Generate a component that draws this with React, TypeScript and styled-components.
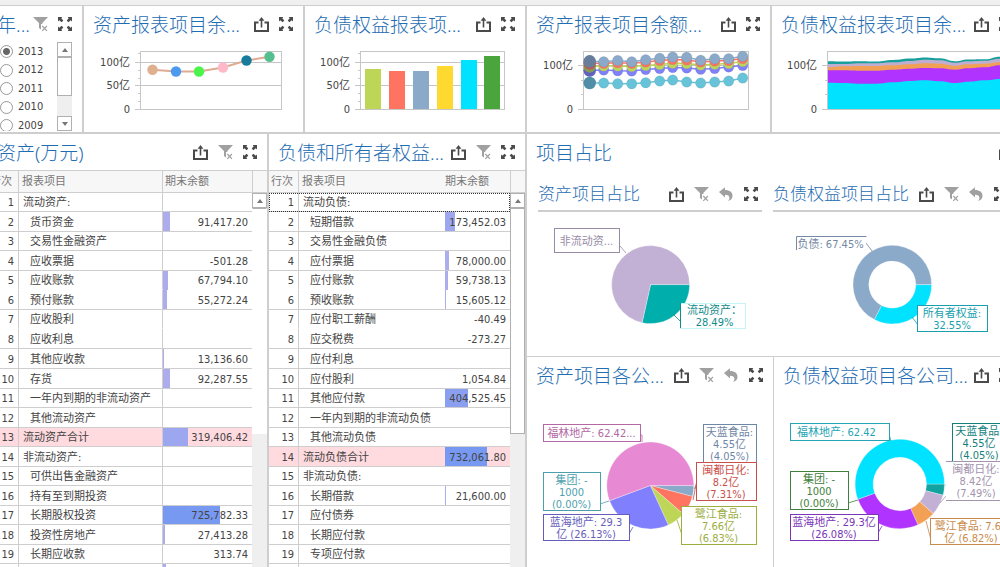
import React from "react";
import styled, { createGlobalStyle, css } from "styled-components";

const LINE = "#cecece";
const TEXT_FONT = `"DejaVu Sans Condensed", "Noto Sans CJK SC", sans-serif`;
const TITLE_FONT = `"Noto Sans", "Noto Sans CJK SC", sans-serif`;

const GlobalStyle = createGlobalStyle`
  * { box-sizing: border-box; }
  body { margin: 0; background: #f0f0f0; font: 11px/18px ${TEXT_FONT}; color: #444; }
  h1, h2, h3 { margin: 0; }
`;

/* ---------- layout ---------- */

const Viewport = styled.main`
  height: 100vh;
  overflow: hidden;
  padding-top: 5px;
`;

const Board = styled.div`
  display: flex;
  flex-direction: column;
  gap: 2px;
  height: 100%;
  margin: 0 -23px 0 -12px;
  border-top: 1px solid ${LINE};
  background: ${LINE};
`;

const TopRow = styled.div`
  display: grid;
  grid-template-columns: 94px 219px 220px 243px 1fr;
  gap: 2px;
  height: 126px;
  flex: none;
`;

const MainRow = styled.div`
  display: grid;
  grid-template-columns: 279px 256px 1fr;
  gap: 2px;
  flex: 1;
  min-height: 0;
`;

const Panel = styled.section`
  display: flex;
  flex-direction: column;
  min-width: 0;
  overflow: hidden;
  background: #fff;
`;

const PanelHead = styled.header`
  display: flex;
  align-items: center;
  justify-content: space-between;
  flex: none;
  height: 36px;
  padding: 0 9px;
`;

const Title = styled.h2`
  padding-top: 2px;
  font: 300 19px/32px ${TITLE_FONT};
  color: #1f6db3;
  white-space: nowrap;
`;

const SubTitle = styled.h3`
  font: 300 17px/30px ${TITLE_FONT};
  color: #1f6db3;
  white-space: nowrap;
`;

const Tools = styled.div`
  display: flex;
  gap: 10px;
  flex: none;
`;

const ToolButton = styled.button<{ $muted?: boolean }>`
  display: block;
  width: 15px;
  height: 15px;
  padding: 0;
  border: 0;
  background: none;
  color: ${(p) => (p.$muted ? "#a0a0a0" : "#4a4a4a")};
  svg { display: block; }
`;

const ShareRow = styled.div`
  display: grid;
  grid-template-columns: 224px 1fr;
  gap: 11px;
  padding: 8px 11px 0;
`;

const ShareItem = styled.section`
  min-width: 0;
`;

const ShareHead = styled.header`
  display: flex;
  align-items: center;
  justify-content: space-between;
  height: 34px;
  padding: 0 3px 0 0;
  border-bottom: 2px solid ${LINE};
`;

const CompanyRow = styled.div`
  display: grid;
  grid-template-columns: 246px 1fr;
  gap: 1px;
  flex: 1;
  border-top: 1px solid ${LINE};
  background: ${LINE};
`;

const Column = styled.div`
  display: flex;
  flex-direction: column;
  flex: none;
`;

const Drawing = styled.svg`
  display: block;
  flex: none;
  overflow: visible;
  text { font: 11px ${TEXT_FONT}; }
`;

/* ---------- icons ---------- */

type ToolName = "export" | "filter" | "undo" | "expand";

const toolLabels: Record<ToolName, string> = {
  export: "导出",
  filter: "清除筛选",
  undo: "返回",
  expand: "最大化",
};

const corner = "M0 0h4.400L3.300 1.300 5.300 3.600 3.600 5.300 1.300 3.300 0 4.400z";

const toolShapes: Record<ToolName, React.ReactNode> = {
  export: (
    <>
      <path d="M4.5 5.5H1V14h13V5.5h-3.5" fill="none" stroke="currentColor" strokeWidth="2" />
      <path d="M7.5 10.5V2" stroke="currentColor" strokeWidth="1.6" />
      <path d="M4.6 3.8 7.5 0l2.9 3.8z" fill="currentColor" />
    </>
  ),
  filter: (
    <>
      <path d="M0 0h15L9.3 6v7.5L6 11V6z" fill="currentColor" />
      <path d="M8 7h7v8H8z" fill="#fff" />
      <path d="M9.3 9l4.6 4.8M13.9 9l-4.6 4.8" stroke="currentColor" strokeWidth="1.2" />
    </>
  ),
  undo: <path d="M0 5 6 .2v2.800c4.800 0 7.500 2.200 7.500 5.800 0 2.700-1.700 4.700-4.500 5.200 1-1 1.400-2 1.400-3.100 0-2-1.400-3.100-4.400-3.100v2.600z" fill="currentColor" />,
  expand: (
    <g fill="currentColor">
      <path d={corner} />
      <path d={corner} transform="translate(14 0) scale(-1 1)" />
      <path d={corner} transform="translate(0 14) scale(1 -1)" />
      <path d={corner} transform="translate(14 14) scale(-1 -1)" />
    </g>
  ),
};

function ToolBar({ tools }: { tools: ToolName[] }) {
  return (
    <Tools>
      {tools.map((t) => (
        <ToolButton key={t} type="button" aria-label={toolLabels[t]} $muted={t === "filter" || t === "undo"}>
          <svg width="15" height="15" viewBox="0 0 15 15">{toolShapes[t]}</svg>
        </ToolButton>
      ))}
    </Tools>
  );
}

function Widget({ title, tools, children }: { title: string; tools: ToolName[]; children?: React.ReactNode }) {
  return (
    <Panel>
      <PanelHead>
        <Title>{title}</Title>
        <ToolBar tools={tools} />
      </PanelHead>
      {children}
    </Panel>
  );
}

/* ---------- scroll bars ---------- */

const ScrollTrack = styled.div`
  display: flex;
  flex-direction: column;
  width: 15px;
  flex: 1;
  background: #efefef;
`;

const ScrollEnd = styled.button<{ $down?: boolean }>`
  display: flex;
  align-items: center;
  justify-content: center;
  height: 15px;
  flex: none;
  padding: 0;
  border: 1px solid #b0b0b0;
  background: #fff;
  &::before {
    content: "";
    border: 3px solid transparent;
    ${(p) => (p.$down ? "border-top: 4px solid #777; border-bottom: 0;" : "border-bottom: 4px solid #777; border-top: 0;")}
  }
`;

const ScrollThumb = styled.div<{ $size: number; $plain?: boolean }>`
  height: ${(p) => p.$size}px;
  flex: none;
  background: #fff;
  border: 1px solid ${(p) => (p.$plain ? "#fff" : "#b0b0b0")};
  border-top-color: #b0b0b0;
`;

const Spacer = styled.div`
  flex: 1;
`;

/* ---------- year filter ---------- */

const YearBody = styled.div`
  display: flex;
  justify-content: space-between;
  height: 89px;
  padding: 0 10px 0 12px;
`;

const YearList = styled.div`
  overflow: hidden;
`;

const YearOption = styled.label`
  display: flex;
  align-items: center;
  gap: 5px;
  height: 19px;
  &:nth-child(even) { height: 18px; }
`;

const Radio = styled.input`
  appearance: none;
  width: 13px;
  height: 13px;
  margin: 0;
  border: 1px solid #999;
  border-radius: 50%;
  background: #fff;
  &:checked { background: radial-gradient(circle, #666 0 3px, #fff 4px); }
`;

function YearFilter() {
  return (
    <Widget title="年..." tools={["filter", "expand"]}>
      <YearBody>
        <YearList>
          {["2013", "2012", "2011", "2010", "2009"].map((y, i) => (
            <YearOption key={y}>
              <Radio type="radio" name="year" value={y} defaultChecked={i === 0} />
              {y}
            </YearOption>
          ))}
        </YearList>
        <Column>
          <ScrollTrack>
            <ScrollEnd type="button" aria-label="向上" />
            <ScrollThumb $size={39} />
            <Spacer />
            <ScrollEnd type="button" aria-label="向下" $down />
          </ScrollTrack>
        </Column>
      </YearBody>
    </Widget>
  );
}

/* ---------- tables ---------- */

const TableBody = styled.div`
  display: flex;
  flex: 1;
  min-height: 0;
`;

const HeadStub = styled.div`
  height: 23px;
  flex: none;
  border: solid ${LINE};
  border-width: 1px 0 1px 1px;
  background: #f7f7f7;
`;

const Sheet = styled.table<{ $divided?: boolean }>`
  flex: 1;
  min-width: 0;
  align-self: flex-start;
  table-layout: fixed;
  border-collapse: separate;
  border-spacing: 0;
  white-space: nowrap;
  th {
    height: 23px;
    padding: 0 3px;
    border: solid ${LINE};
    border-width: 1px 0;
    background: #f7f7f7;
    color: #777;
    font-weight: 400;
    text-align: left;
  }
  th:first-child { padding: 0 2px; }
  th:last-child { padding: 0 ${(p) => (p.$divided ? 2 : 0)}px; }
  th:first-child, td:first-child { border-right: 1px solid ${LINE}; }
  ${(p) =>
    p.$divided &&
    css`
      th:nth-child(2), td:nth-child(2) { border-right: 1px solid ${LINE}; }
    `}
`;

const Row = styled.tr<{ $total?: boolean; $focus?: boolean }>`
  background: ${(p) => (p.$total ? "#ffdbe0" : "#fff")};
  ${(p) => p.$focus && "outline: 1px dotted #333; outline-offset: -1px;"}
  td { height: 19px; padding: 2px 4px 0; border-bottom: 1px solid ${LINE}; line-height: 16px; }
  &:nth-child(even) td, &:nth-child(9) td { height: 20px; }
  &:nth-child(5) td, &:nth-child(7) td { border-bottom-color: transparent; }
`;

const IndexCell = styled.td`
  text-align: right;
`;

const NameCell = styled.td<{ $indent: boolean }>`
  && { padding-left: ${(p) => (p.$indent ? 11 : 4)}px; }
`;

const ValueCell = styled.td<{ $bar: number; $tone: string }>`
  text-align: right;
  background: linear-gradient(${(p) => p.$tone}, ${(p) => p.$tone}) 0 0 / ${(p) => p.$bar}px 100% no-repeat border-box;
`;

type Item = [name: string, value: number | null];

function toneFor(value: number) {
  if (value > 600000) return "#7799f2";
  if (value > 400000) return "#8a9ff0";
  if (value > 150000) return "#9ca7f0";
  return "#adadee";
}

const format = (v: number) => v.toLocaleString("en-US", { minimumFractionDigits: 2, maximumFractionDigits: 2 });

interface StatementProps {
  title: string;
  items: Item[];
  scale: number;
  columns: number[];
  divided?: boolean;
  focusFirst?: boolean;
}

function Statement({ title, items, scale, columns, divided, focusFirst }: StatementProps) {
  return (
    <Widget title={title} tools={["export", "filter", "expand"]}>
      <TableBody>
        <Sheet $divided={divided}>
          <colgroup>
            {columns.map((w, i) => (
              <col key={i} width={w} />
            ))}
            <col />
          </colgroup>
          <thead>
            <tr>
              <th scope="col">行次</th>
              <th scope="col">报表项目</th>
              <th scope="col">期末余额</th>
            </tr>
          </thead>
          <tbody>
            {items.map(([name, value], i) => {
              const size = value === null ? 0 : value / scale;
              const total = name.endsWith("合计");
              const top = total || name.endsWith(":");
              return (
                <Row key={i} $total={total} $focus={focusFirst && i === 0}>
                  <IndexCell>{i + 1}</IndexCell>
                  <NameCell $indent={!top}>{name}</NameCell>
                  <ValueCell $bar={size < 0.5 ? 0 : Math.round(size)} $tone={toneFor(value ?? 0)}>
                    {value !== null && name ? format(value) : ""}
                  </ValueCell>
                </Row>
              );
            })}
          </tbody>
        </Sheet>
        <Column>
          <HeadStub />
          <ScrollTrack>
            <ScrollEnd type="button" aria-label="向上" />
            <ScrollThumb $size={226} $plain={divided} />
          </ScrollTrack>
        </Column>
      </TableBody>
    </Widget>
  );
}

const assets: Item[] = [
  ["流动资产:", null],
  ["货币资金", 91417.2],
  ["交易性金融资产", null],
  ["应收票据", -501.28],
  ["应收账款", 67794.1],
  ["预付账款", 55272.24],
  ["应收股利", null],
  ["应收利息", null],
  ["其他应收款", 13136.6],
  ["存货", 92287.55],
  ["一年内到期的非流动资产", null],
  ["其他流动资产", null],
  ["流动资产合计", 319406.42],
  ["非流动资产:", null],
  ["可供出售金融资产", null],
  ["持有至到期投资", null],
  ["长期股权投资", 725782.33],
  ["投资性房地产", 27413.28],
  ["长期应收款", 313.74],
  ["", 36000],
];

const liabilities: Item[] = [
  ["流动负债:", null],
  ["短期借款", 173452.03],
  ["交易性金融负债", null],
  ["应付票据", 78000],
  ["应付账款", 59738.13],
  ["预收账款", 15605.12],
  ["应付职工薪酬", -40.49],
  ["应交税费", -273.27],
  ["应付利息", null],
  ["应付股利", 1054.84],
  ["其他应付款", 404525.45],
  ["一年内到期的非流动负债", null],
  ["其他流动负债", null],
  ["流动负债合计", 732061.8],
  ["非流动负债:", null],
  ["长期借款", 21600],
  ["应付债券", null],
  ["长期应付款", null],
  ["专项应付款", null],
  ["", null],
];

/* ---------- axis charts ---------- */

interface AxisProps {
  left: number;
  right: number;
  labels: [text: string, y: number][];
  minor: number[];
}

function Axis({ left, right, labels, minor }: AxisProps) {
  return (
    <g>
      <rect x={left + 0.5} y="51.5" width={right - left} height="58" fill="none" stroke="#c6c6c6" />
      {labels.map(([t, y]) => (
        <React.Fragment key={t}>
          <path d={`M${left - 5} ${y + 0.5}H${right}`} stroke="#c6c6c6" />
          <text x={left - 10} y={y + 4} textAnchor="end" fill="#444">{t}</text>
        </React.Fragment>
      ))}
      {minor.map((y) => (
        <path key={y} d={`M${left - 2} ${y + 0.5}H${left}`} stroke="#c6c6c6" />
      ))}
    </g>
  );
}

const fullAxis: [string, number][] = [["100亿", 62], ["50亿", 85], ["0", 109]];
const shortAxis: [string, number][] = [["100亿", 65], ["0", 109]];
const fineTicks = [53, 70, 78, 93, 101];

function LineChart() {
  const points: [number, number, string][] = [
    [152.5, 69.7, "#dfb08e"],
    [176, 71.5, "#4a9af0"],
    [199, 71.5, "#4bf34b"],
    [223, 67.5, "#ffb9c9"],
    [246.5, 60.5, "#197b9b"],
    [269.5, 56.8, "#56bf8f"],
  ];
  return (
    <Drawing width="219" height="90" viewBox="84 42 219 90">
      <Axis left={140} right={281} labels={fullAxis} minor={fineTicks} />
      <polyline points={points.map(([x, y]) => `${x},${y}`).join(" ")} fill="none" stroke="#e0ab93" strokeWidth="2" />
      {points.map(([x, y, c]) => (
        <circle key={x} cx={x} cy={y} r="5.2" fill={c} />
      ))}
    </Drawing>
  );
}

function BarChart() {
  const bars: [number, number, string][] = [
    [365, 69, "#bdd657"],
    [389, 71, "#ff7361"],
    [413, 71, "#8ba9c8"],
    [437, 66, "#ffd930"],
    [461, 60, "#00e2ff"],
    [484, 56, "#4aa53d"],
  ];
  return (
    <Drawing width="220" height="90" viewBox="305 42 220 90">
      <Axis left={360} right={504} labels={fullAxis} minor={fineTicks} />
      {bars.map(([x, y, c]) => (
        <rect key={x} x={x} y={y} width="16" height={109 - y} fill={c} />
      ))}
    </Drawing>
  );
}

function MultiLineChart() {
  const xs = [589.7, 603.7, 617.7, 631.7, 645.7, 659.7, 672.7, 686.7, 700.7, 714.7, 728.7, 742.7];
  const series: [string, number[]][] = [
    ["#66c3d8", [83, 83, 83.7, 83.7, 82.7, 81, 80, 82, 83, 82, 81, 78]],
    ["#8080fa", [70.5, 70, 70.7, 71, 69.5, 68.6, 67.5, 68, 69.3, 68.5, 67, 65.5]],
    ["#bdd657", [66.3, 66, 66, 66.5, 65.5, 64.5, 63.3, 63.5, 65, 64.3, 63.5, 61.5]],
    ["#ff7361", [63.3, 63.3, 62.7, 63.3, 62, 60.5, 59.5, 60, 62, 61, 60.5, 58.5]],
    ["#8ba9c8", [61.3, 61.8, 60.5, 61.8, 59.7, 58.3, 57, 57.3, 60.3, 58.7, 58.7, 56.3]],
  ];
  return (
    <Drawing width="243" height="90" viewBox="527 42 243 90">
      <Axis left={583} right={748} labels={shortAxis} minor={[80, 94]} />
      {series.map(([c, ys]) => (
        <g key={c} fill={c}>
          <polyline points={ys.map((y, i) => `${xs[i]},${y}`).join(" ")} fill="none" stroke={c} strokeWidth="1.5" />
          {ys.map((y, i) => (
            <circle key={i} cx={xs[i]} cy={y} r="5.2" stroke="#5b6f8d" strokeOpacity=".2" strokeWidth=".7" />
          ))}
          <circle cx={xs[0]} cy={ys[0]} r="6.2" fill={c} />
          <circle cx={xs[0]} cy={ys[0]} r="6.2" fill="#222a4a" opacity=".35" />
        </g>
      ))}
    </Drawing>
  );
}

function AreaChart() {
  const xs = [828, 843, 860, 876, 893, 910, 925, 940, 955, 968, 985, 1000, 1013];
  const layers: [string, number[]][] = [
    ["#16a09c", [61.3, 61.6, 61.3, 61.6, 60, 58.6, 57.4, 58.3, 61.3, 59.5, 59.3, 56.7, 55]],
    ["#bfaed2", [64, 64, 63.2, 63.3, 62.3, 60.9, 59.7, 60.2, 62.7, 61.2, 60.7, 58.7, 57]],
    ["#f1a055", [67.3, 66.3, 66, 66, 65.3, 64.3, 63.3, 63.7, 65.7, 64.2, 63.7, 62.3, 61]],
    ["#b033ff", [70.3, 70.3, 70.7, 70.7, 69.7, 68.7, 68, 68.3, 69.7, 68.3, 67.3, 65.3, 64]],
    ["#00e2ff", [82.7, 83, 83.7, 83.7, 82.3, 81, 80.3, 81.3, 83, 81.7, 80.3, 79, 78]],
  ];
  /* Each layer's upper edge runs through the midpoints, so that it bends softly. */
  const edge = (ys: number[]) =>
    ys
      .slice(1)
      .map((y, i) => {
        const mx = (xs[i] + xs[i + 1]) / 2;
        return `C${mx} ${ys[i]} ${mx} ${y} ${xs[i + 1]} ${y}`;
      })
      .join("");
  return (
    <Drawing width="251" height="90" viewBox="772 42 251 90">
      <Axis left={827} right={1013} labels={shortAxis} minor={[80, 94]} />
      {layers.map(([c, ys]) => (
        <path key={c} d={`M828 109V${ys[0]}${edge(ys)}V109z`} fill={c} />
      ))}
    </Drawing>
  );
}

/* ---------- pies ---------- */

interface PieProps {
  cx: number;
  cy: number;
  r: number;
  hole?: number;
  slices: [share: number, color: string][];
}

function Pie({ cx, cy, r, hole = 0, slices }: PieProps) {
  let start = 0;
  const at = (share: number, radius: number) => {
    const a = share * 2 * Math.PI;
    return `${cx + radius * Math.cos(a)} ${cy + radius * Math.sin(a)}`;
  };
  return (
    <g>
      {slices.map(([share, color]) => {
        const end = start + share / 100;
        const big = share > 50 ? 1 : 0;
        const d = `M${at(start, hole)}L${at(start, r)}A${r} ${r} 0 ${big} 1 ${at(end, r)}L${at(end, hole)}A${hole} ${hole} 0 ${big} 0 ${at(start, hole)}z`;
        start = end;
        return <path key={color} d={d} fill={color} stroke="#fff" strokeOpacity=".5" strokeWidth=".6" />;
      })}
    </g>
  );
}

interface CalloutProps {
  box: [x: number, y: number, w: number, h: number];
  color: string;
  lines: string[];
  leader?: string;
  edge?: string;
  frame?: string;
  shift?: number;
}

/* A framed label; `frame` is the colour of its rectangle and `edge` an extra stroke over it. */
function Callout({ box: [x, y, w, h], color, lines, leader, edge, frame, shift = 0 }: CalloutProps) {
  const step = 12;
  const first = y + h / 2 + 4.5 - ((lines.length - 1) * step) / 2;
  return (
    <g>
      {leader && <path d={leader} fill="none" stroke={color} strokeOpacity=".8" />}
      <rect x={x + 0.5} y={y + 0.5} width={w} height={h} fill="#fff" stroke={frame ?? color} />
      {edge && <path d={edge} fill="none" stroke={color} />}
      {lines.map((t, i) => (
        <text key={i} x={x + w / 2 + shift} y={first + i * step} textAnchor="middle" fill={color}>{t}</text>
      ))}
    </g>
  );
}

function AssetShare() {
  return (
    <Drawing width="224" height="144" viewBox="538 212 224 144">
      <Pie cx={650.6} cy={284.6} r={39} slices={[[28.49, "#00aeac"], [71.51, "#c3b1d5"]]} />
      <Callout box={[554, 228, 65, 24]} color="#978ba6" lines={["非流动资..."]} leader="M620 246l6 7" />
      <Callout box={[680, 303, 65, 25]} color="#128b8b" frame="#c4f4f4" lines={["流动资产：", "28.49%"]} edge="M680.5 303v25" leader="M673 314l8 8" shift={2} />
    </Drawing>
  );
}

function LiabilityShare() {
  return (
    <Drawing width="239" height="144" viewBox="773 212 239 144">
      <Pie cx={892.3} cy={284.6} r={39.3} hole={23.5} slices={[[32.55, "#00e2ff"], [67.45, "#8ba9c8"]]} />
      <Callout box={[796, 236, 69, 14]} color="#7488a4" frame="#fff" lines={["负债: 67.45%"]} edge="M796.5 250v-13.500h70" leader="M866 243l6 8" />
      <Callout box={[917, 305, 70, 26]} color="#1a9fae" lines={["所有者权益:", "32.55%"]} leader="M912 317l6 8" />
    </Drawing>
  );
}

function AssetCompanies() {
  return (
    <Drawing width="246" height="174" viewBox="527 393 246 174">
      <Pie
        cx={650.3}
        cy={485.5}
        r={43.5}
        slices={[[4.05, "#8ba9c8"], [7.31, "#ff7361"], [6.83, "#bdd657"], [26.13, "#8080ff"], [55.68, "#e78ad3"]]}
      />
      <Callout box={[543, 424, 97, 17]} color="#b368a5" lines={["福林地产: 62.42..."]} leader="M640 435h2v7" />
      <Callout box={[543, 472, 57, 38]} color="#4d9fae" lines={["集团: -", "1000", "(0.00%)"]} leader="M600 504l9-3" />
      <Callout box={[543, 514, 86, 26]} color="#665dbb" lines={["蓝海地产: 29.3", "亿 (26.13%)"]} leader="M629 534l4-7" />
      <Callout box={[703, 424, 53, 38]} color="#6f87a6" lines={["天蓝食品:", "4.55亿", "(4.05%)"]} leader="M704 459l-2 16 -8 14" />
      <Callout box={[696, 462, 60, 38]} color="#c9504a" lines={["闽都日化:", "8.2亿", "(7.31%)"]} leader="M697 480l-4 20" />
      <Callout box={[681, 506, 75, 38]} color="#9bae3e" lines={["鹭江食品:", "7.66亿", "(6.83%)"]} leader="M682 535l-5 -15" />
    </Drawing>
  );
}

function LiabilityCompanies() {
  return (
    <Drawing width="249" height="174" viewBox="774 393 249 174">
      <Pie
        cx={899.8}
        cy={484}
        r={44.7}
        hole={26.7}
        slices={[[4.05, "#10a39f"], [7.49, "#c3b1d5"], [6.82, "#f1a055"], [26.06, "#b033ff"], [55.58, "#00e2ff"]]}
      />
      <Callout box={[790, 423, 99, 17]} color="#24a4b4" lines={["福林地产: 62.42"]} leader="M889 434l2 7" shift={-3} />
      <Callout box={[790, 471, 58, 38]} color="#3f803c" lines={["集团: -", "1000", "(0.00%)"]} leader="M848 503l10-3" />
      <Callout box={[790, 514, 88, 26]} color="#7a35b8" lines={["蓝海地产: 29.3亿", "(26.08%)"]} leader="M878 533l4-7" />
      <Callout box={[952, 423, 60, 38]} color="#157f7c" lines={["天蓝食品:", "4.55亿", "(4.05%)"]} leader="M953 458l-7 28" shift={-3} />
      <Callout box={[946, 461, 66, 38]} color="#a394ad" frame="#fff" lines={["闽都日化:", "8.42亿", "(7.49%)"]} edge="M946 461.5h67M946 500.5h67" leader="M947 495l-7 8" shift={-3} />
      <Callout box={[930, 518, 82, 26]} color="#c98b4c" lines={["鹭江食品: 7.66", "亿 (6.82%)"]} leader="M931 540l-5-19" />
    </Drawing>
  );
}

const shareTools: ToolName[] = ["export", "filter", "undo", "expand"];

export default function App() {
  return (
    <>
      <GlobalStyle />
      <Viewport>
        <Board>
          <TopRow>
            <YearFilter />
            <Widget title="资产报表项目余..." tools={["export", "expand"]}><LineChart /></Widget>
            <Widget title="负债权益报表项..." tools={["export", "expand"]}><BarChart /></Widget>
            <Widget title="资产报表项目余额..." tools={["export", "expand"]}><MultiLineChart /></Widget>
            <Widget title="负债权益报表项目余..." tools={["export", "expand"]}><AreaChart /></Widget>
          </TopRow>
          <MainRow>
            <Statement title="资产(万元)" items={assets} scale={12733} columns={[31, 144]} divided />
            <Statement title="负债和所有者权益..." items={liabilities} scale={17430} columns={[30, 146]} focusFirst />
            <Panel>
              <PanelHead>
                <Title>项目占比</Title>
                <ToolBar tools={["export"]} />
              </PanelHead>
              <ShareRow>
                <ShareItem>
                  <ShareHead>
                    <SubTitle>资产项目占比</SubTitle>
                    <ToolBar tools={shareTools} />
                  </ShareHead>
                  <AssetShare />
                </ShareItem>
                <ShareItem>
                  <ShareHead>
                    <SubTitle>负债权益项目占比</SubTitle>
                    <ToolBar tools={shareTools} />
                  </ShareHead>
                  <LiabilityShare />
                </ShareItem>
              </ShareRow>
              <CompanyRow>
                <Widget title="资产项目各公..." tools={shareTools}><AssetCompanies /></Widget>
                <Widget title="负债权益项目各公司..." tools={["export", "expand"]}><LiabilityCompanies /></Widget>
              </CompanyRow>
            </Panel>
          </MainRow>
        </Board>
      </Viewport>
    </>
  );
}
